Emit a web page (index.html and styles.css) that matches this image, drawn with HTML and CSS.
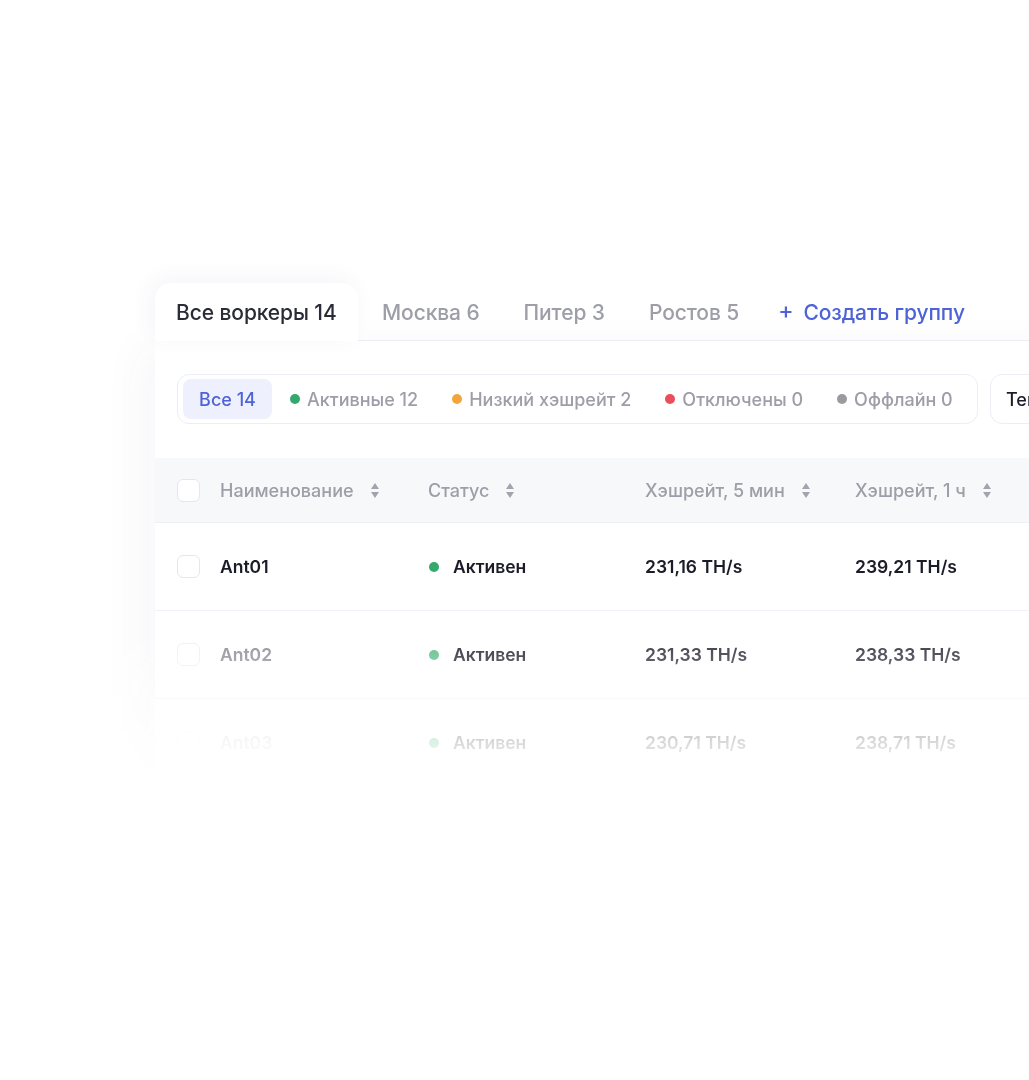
FILE: index.html
```html
<!DOCTYPE html>
<html lang="ru">
<head>
<meta charset="utf-8">
<title>Воркеры</title>
<link rel="stylesheet" href="styles.css">
</head>
<body>
<div class="stage">
  <div class="panel">
    <div class="tabs">
      <div class="tab tab-active">Все воркеры 14</div>
      <div class="tab">Москва 6</div>
      <div class="tab">Питер 3</div>
      <div class="tab">Ростов 5</div>
      <div class="tab tab-add"><span class="plus">+</span>Создать группу</div>
      <div class="tabs-rest"></div>
    </div>
    <div class="card">
      <div class="filters">
        <div class="segments">
          <div class="seg seg-active">Все 14</div>
          <div class="seg"><span class="dot dot-green"></span>Активные 12</div>
          <div class="seg"><span class="dot dot-orange"></span>Низкий хэшрейт 2</div>
          <div class="seg"><span class="dot dot-red"></span>Отключены 0</div>
          <div class="seg"><span class="dot dot-grey"></span>Оффлайн 0</div>
        </div>
        <div class="select">Теги</div>
      </div>

      <div class="table">
        <div class="row head">
          <div class="cell"><span class="check"></span></div>
          <div class="cell">Наименование <span class="sort"></span></div>
          <div class="cell">Статус <span class="sort"></span></div>
          <div class="cell">Хэшрейт, 5 мин <span class="sort"></span></div>
          <div class="cell">Хэшрейт, 1 ч <span class="sort"></span></div>
        </div>
        <div class="row">
          <div class="cell"><span class="check"></span></div>
          <div class="cell name">Ant01</div>
          <div class="cell status"><span class="dot dot-green"></span>Активен</div>
          <div class="cell">231,16 TH/s</div>
          <div class="cell">239,21 TH/s</div>
        </div>
        <div class="row row2">
          <div class="cell"><span class="check"></span></div>
          <div class="cell name">Ant02</div>
          <div class="cell status"><span class="dot dot-green"></span>Активен</div>
          <div class="cell">231,33 TH/s</div>
          <div class="cell">238,33 TH/s</div>
        </div>
        <div class="row row3">
          <div class="cell"><span class="check"></span></div>
          <div class="cell name">Ant03</div>
          <div class="cell status"><span class="dot dot-green"></span>Активен</div>
          <div class="cell">230,71 TH/s</div>
          <div class="cell">238,71 TH/s</div>
        </div>
      </div>
    </div>
  </div>
</div>
</body>
</html>
```

FILE: styles.css
```css
html, body {
  margin: 0;
  padding: 0;
  background: #ffffff;
}

body {
  font-family: "Inter", "Noto Sans", sans-serif;
  color: #1c1c28;
  overflow: hidden;
}

.stage {
  width: 1029px;
  height: 1080px;
  overflow: hidden;
  padding: 253px 0 0 85px;
  box-sizing: border-box;
}

.panel {
  width: 1180px;
  padding: 30px 0 0 70px;
  -webkit-mask-image: linear-gradient(to bottom, #000 0, #000 375px, rgba(0,0,0,0.16) 490px, rgba(0,0,0,0) 540px);
  mask-image: linear-gradient(to bottom, #000 0, #000 375px, rgba(0,0,0,0.16) 490px, rgba(0,0,0,0) 540px);
}

/* Tabs */
.tabs {
  display: flex;
  align-items: stretch;
  height: 58px;
  position: relative;
}

.tab {
  display: flex;
  align-items: center;
  padding: 1px 22px 0;
  font-size: 21px;
  font-weight: 500;
  color: #9d9ea7;
  letter-spacing: -0.1px;
  border-bottom: 1px solid #eef0f6;
  white-space: nowrap;
}

.tab-active {
  width: 203px;
  box-sizing: border-box;
  padding-left: 21px;
  background: #ffffff;
  color: #2a2b36;
  border-radius: 16px 16px 0 0;
  border-bottom-color: #ffffff;
  box-shadow: -4px -4px 22px rgba(60, 70, 140, 0.06);
  position: relative;
  z-index: 2;
}

.tab:nth-child(2) { padding-left: 24px; }

.tab-add {
  color: #4d63d6;
  padding-left: 17px;
}

.plus {
  font-size: 23px;
  font-weight: 500;
  margin-right: 10px;
  margin-top: -3px;
}

.tabs-rest {
  flex: 1;
  border-bottom: 1px solid #eef0f6;
}

/* Card */
.card {
  background: #ffffff;
  box-shadow: -14px 6px 40px rgba(60, 70, 140, 0.045);
  padding-top: 33px;
  position: relative;
  z-index: 1;
}

.filters {
  display: flex;
  gap: 12px;
  padding-left: 22px;
}

.segments {
  display: flex;
  align-items: center;
  flex: none;
  width: 801px;
  height: 50px;
  box-sizing: border-box;
  border: 1px solid #eceef5;
  border-radius: 12px;
  padding: 0 5px;
}

.seg {
  display: flex;
  align-items: center;
  flex: none;
  height: 40px;
  padding: 0 17px;
  font-size: 18px;
  font-weight: 500;
  color: #9d9ea7;
  white-space: nowrap;
}

.seg-active {
  width: 89px;
  box-sizing: border-box;
  justify-content: center;
  padding: 0;
  background: #eef1fd;
  color: #4d63d6;
  border-radius: 8px;
  margin-right: 1px;
}

.seg .dot {
  margin-right: 7px;
}

.select {
  display: flex;
  align-items: center;
  flex: none;
  height: 50px;
  width: 200px;
  box-sizing: border-box;
  border: 1px solid #eceef5;
  border-radius: 12px;
  padding-left: 15px;
  font-size: 18px;
  font-weight: 500;
  color: #1c1c28;
}

.dot {
  display: inline-block;
  width: 10px;
  height: 10px;
  border-radius: 50%;
  flex: none;
}

.dot-green { background: #35a96b; }
.dot-orange { background: #f2a53a; }
.dot-red { background: #eb4d5c; }
.dot-grey { background: #9a9a9f; }

/* Table */
.table {
  margin-top: 34px;
}

.row {
  display: grid;
  grid-template-columns: 65px 208px 217px 210px 300px;
  height: 87px;
  align-items: center;
  border-bottom: 1px solid #f1f2f7;
  font-size: 17.5px;
  font-weight: 600;
  color: #1c1c28;
}

.row.head {
  height: 63px;
  background: #f7f8fa;
  font-size: 18px;
  font-weight: 500;
  color: #9d9ea7;
  border-bottom: 1px solid #eff0f5;
  padding-top: 1px;
}

.cell {
  display: flex;
  align-items: center;
  white-space: nowrap;
}

.cell:first-child {
  padding-left: 22px;
}

.check {
  display: inline-block;
  width: 23px;
  height: 23px;
  box-sizing: border-box;
  border: 1.5px solid #e4e6f6;
  border-radius: 6px;
  background: #ffffff;
}

.sort {
  display: inline-block;
  position: relative;
  width: 9px;
  height: 15px;
  margin-left: 17px;
}

.sort::before,
.sort::after {
  content: "";
  position: absolute;
  left: 0;
  border-left: 4.5px solid transparent;
  border-right: 4.5px solid transparent;
}

.sort::before {
  top: 0;
  border-bottom: 6px solid #a2a3ad;
}

.sort::after {
  bottom: 0;
  border-top: 6px solid #a2a3ad;
}

.status .dot {
  margin-left: 1px;
  margin-right: 14px;
}

.row2 .name { color: #8b8c96; }
.row2 .check { border-color: #eeeff8; }
.row2 .status { color: #22232e; }
.row2 .dot-green { background: #5bbd88; }
.row2 { color: #2a2b36; }
.row3 .check { border-color: #f6f6fb; }
.row3 .name { color: #d0d1d6; }
```
